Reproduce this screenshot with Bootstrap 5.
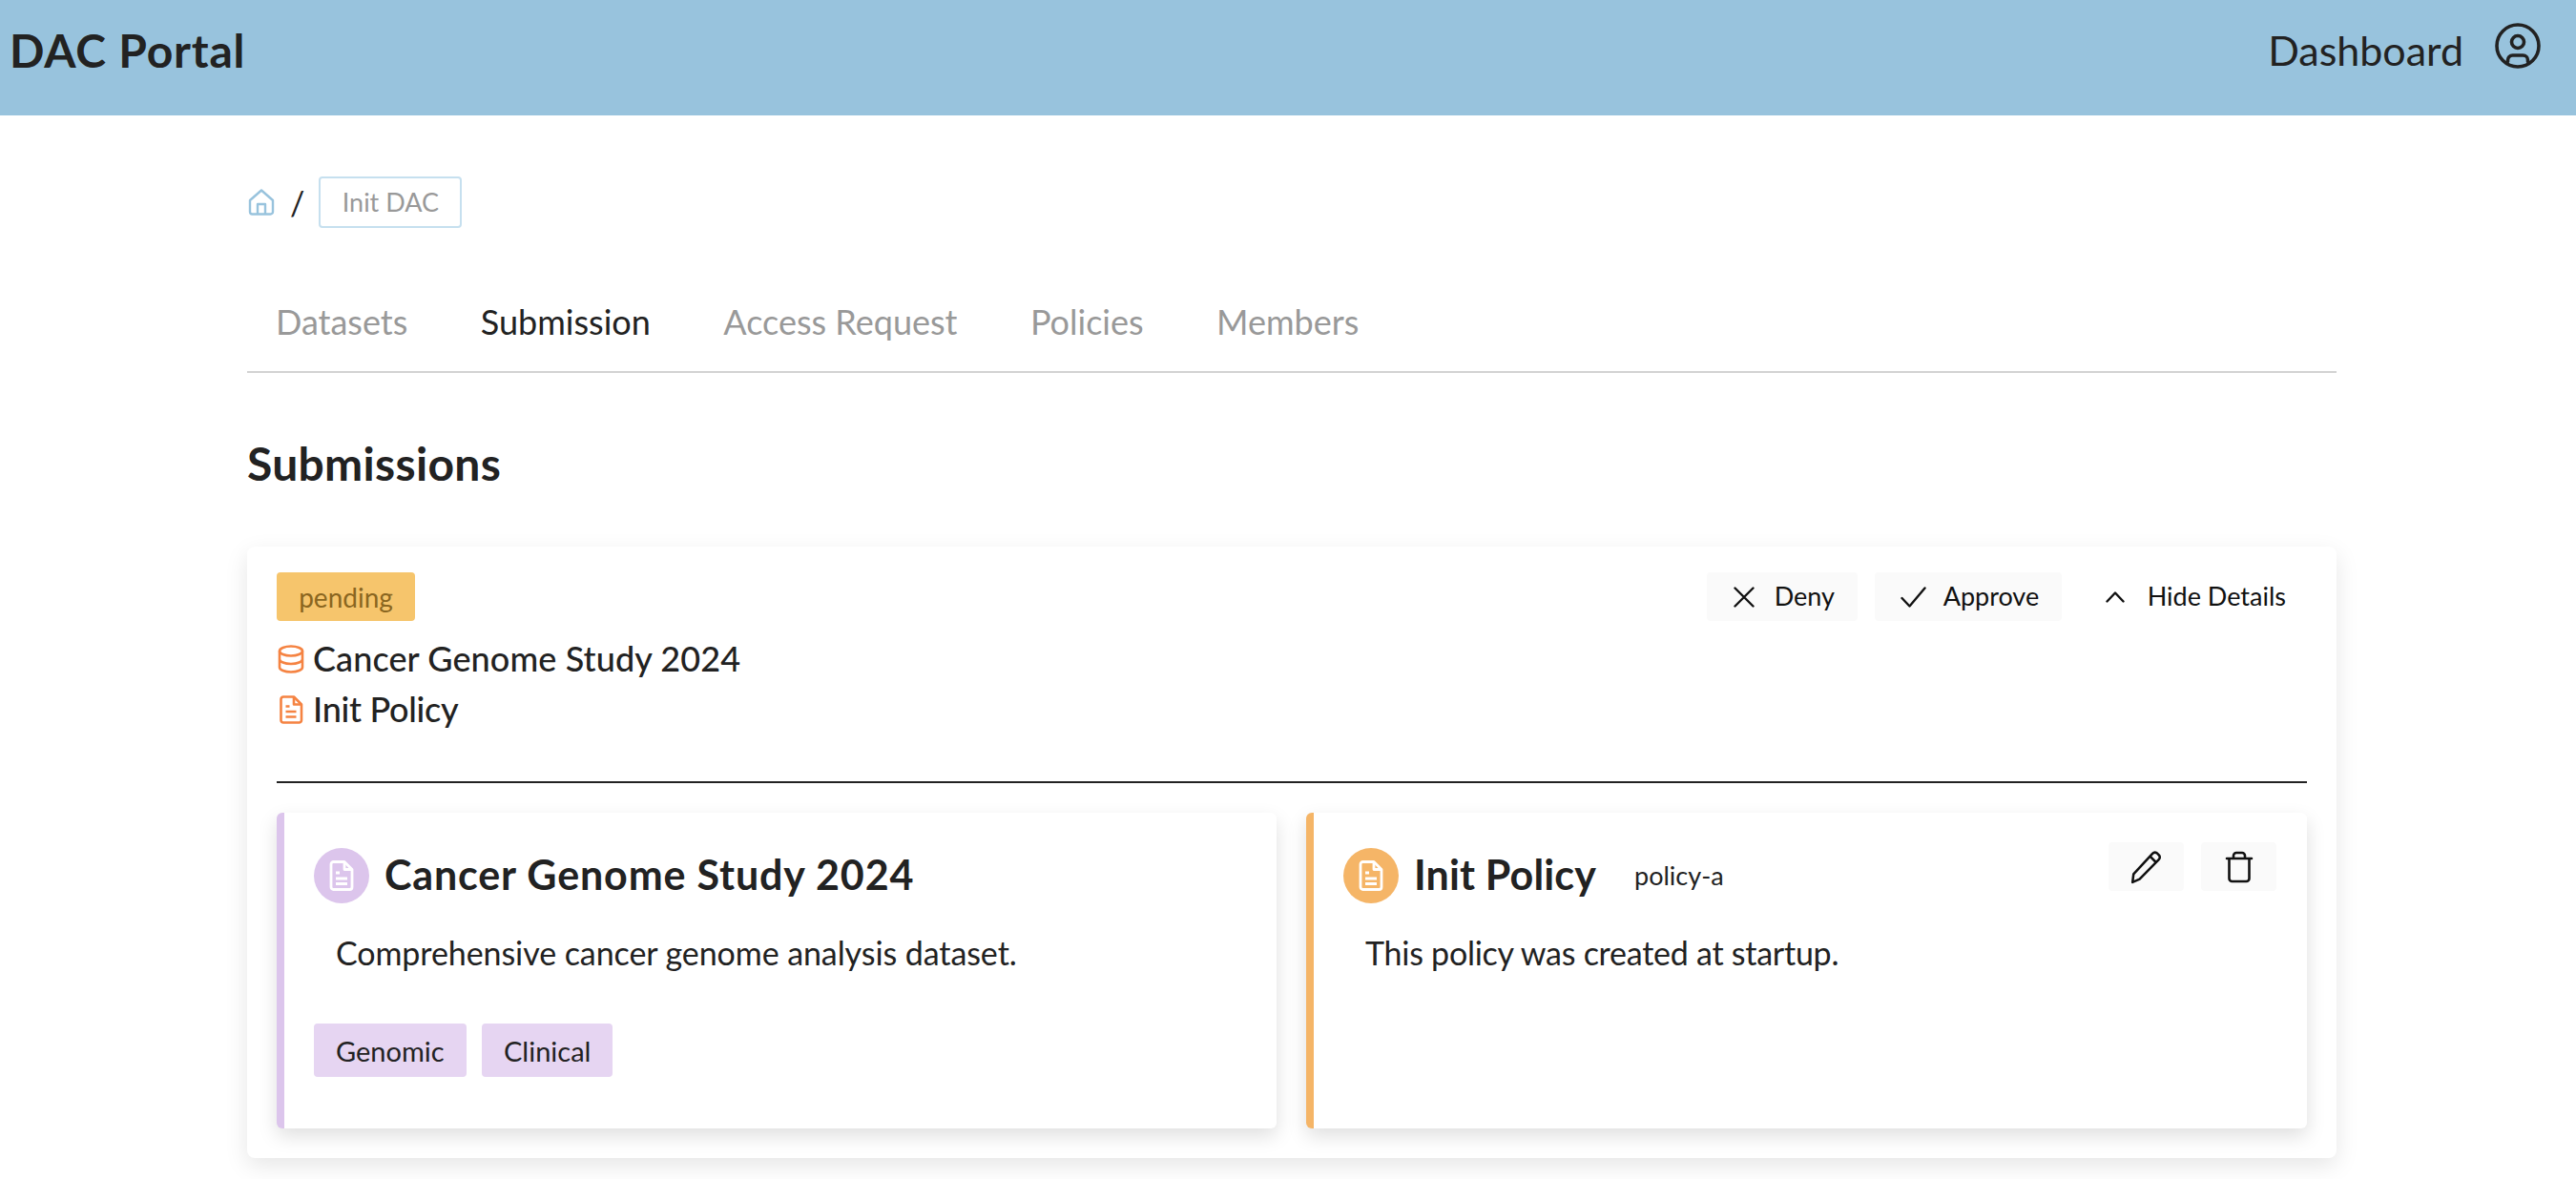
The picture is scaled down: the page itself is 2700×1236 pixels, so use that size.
<!DOCTYPE html>
<html lang="en">
<head>
<meta charset="utf-8">
<title>DAC Portal</title>
<link href="https://cdn.jsdelivr.net/npm/bootstrap@5.3.0/dist/css/bootstrap.min.css" rel="stylesheet">
<style>
body{font-family:Lato,"Noto Sans",sans-serif;color:#222;background:#fff;font-size:32px}
.dac-bar{background:#98c3dd;height:121px;padding:0 37px 16px 10px}
.dac-brand{font-size:48px;font-weight:700;color:#222;padding:0;margin:0;line-height:1;letter-spacing:.8px}
.dac-dash{font-size:43px;color:#222;padding:0;margin-right:33px;line-height:1}
.dac-avatar{margin-bottom:10px}
.dac-page{margin:0 251px 0 259px;padding-bottom:23px}
.dac-crumbs{margin-top:64px;height:54px}
.dac-crumbbox{border:2px solid #c6e0ef;border-radius:4px;color:#999;font-size:27px;height:54px;width:150px;margin-left:15px}
.dac-slash{font-size:34px;margin-left:16px}
.dac-home{margin-left:1px}
.dac-tabs{margin-top:48px;height:104px;border-bottom:2px solid #d3d3d3;padding-left:30px;gap:76.5px}
.dac-tabs .nav-link{font-size:36px;color:#999;padding:0;line-height:1;margin-bottom:2px}
.dac-tabs .nav-link.active{color:#222}
.dac-title{font-size:48px;font-weight:700;margin:66px 0 0;line-height:58px;letter-spacing:.3px}
.dac-outer{margin-top:58px;border:0;border-radius:8px;box-shadow:0 8px 24px rgba(0,0,0,.1);padding:27px 31px 31px}
.dac-status{background:#f6c56c;color:#8a6620;font-size:28px;font-weight:400;height:51px;width:145px;border-radius:4px;padding:0}
.dac-line{font-size:36px;font-weight:500;line-height:53px;letter-spacing:.1px}
.dac-line+.dac-line{letter-spacing:-.3px}
.dac-line svg{margin:0 9px 0 1px;flex:none}
.dac-gapped{margin-top:13px}
.dac-act{font-size:27px;height:51px;background:#fafafa;border:0;border-radius:4px;color:#111;padding:0;gap:21px}
.dac-act.dac-plain{background:transparent;gap:24px}
.dac-deny{width:158px;padding-left:28px}
.dac-approve{width:196px;padding-left:27px;gap:18px;margin-left:18px}
.dac-hide{margin-left:46px;margin-right:22px}
.dac-rule{height:2px;background:#222;margin:49px 0 31px}
.dac-pair{gap:31px}
.dac-inner{border:0;border-left:8px solid #dcc5ec;border-radius:6px;box-shadow:0 8px 20px rgba(0,0,0,.13);height:331px;padding:37px 31px 0;flex:1 1 0}
.dac-inner.dac-orange{border-left-color:#f5b567;padding-right:32px}
.dac-round{width:58px;height:58px;border-radius:50%;background:#dcc5ec;flex:none}
.dac-orange .dac-round{background:#f5b567}
.dac-name{font-size:43px;font-weight:700;margin:-3px 0 0 16px;line-height:58px;letter-spacing:.85px}
.dac-orange .dac-name{letter-spacing:.15px}
.dac-key{font-size:27px;margin-left:40px}
.dac-desc{font-size:34px;margin:29px 0 0 23px;line-height:46px;letter-spacing:-.08px}
.dac-orange .dac-desc{letter-spacing:-.25px}
.dac-tagrow{gap:16px;margin-top:51px}
.dac-tag{background:#e6d5f2;color:#222;font-size:29px;height:56px;border-radius:4px;font-weight:400;padding:0 0 0 23px}
.dac-wide{width:160px}
.dac-narrow{width:137px}
.dac-tools{gap:18px;margin-top:-6px}
.dac-sq{width:79px;height:51px;background:#fafafa;border:0;border-radius:4px;padding:0}
</style>
</head>
<body>
<nav class="navbar dac-bar d-flex justify-content-between align-items-center">
  <a class="navbar-brand dac-brand" href="#">DAC Portal</a>
  <div class="d-flex align-items-center">
    <a class="nav-link dac-dash" href="#">Dashboard</a>
    <svg class="dac-avatar" width="48" height="48" viewBox="0 0 48 48" fill="none" stroke="#222" stroke-width="3.6" stroke-linecap="round"><circle cx="24" cy="24" r="22"/><circle cx="24" cy="20" r="6.5"/><path d="M13.5 40.5V39a5 5 0 0 1 5-5h11a5 5 0 0 1 5 5v1.5"/></svg>
  </div>
</nav>
<main class="dac-page">
  <div class="d-flex align-items-center dac-crumbs">
    <a href="#" class="d-flex dac-home"><svg width="28" height="28" viewBox="0 0 28 28" fill="none" stroke="#98c3dd" stroke-width="2.4" stroke-linejoin="round"><path d="M2 12 14 1.500 26 12V24a2.500 2.500 0 0 1-2.500 2.500h-19A2.500 2.500 0 0 1 2 24Z"/><path d="M10 26.500V16h8v10.500"/></svg></a>
    <span class="dac-slash">/</span>
    <span class="dac-crumbbox d-flex align-items-center justify-content-center">Init DAC</span>
  </div>
  <ul class="nav dac-tabs align-items-center">
    <li class="nav-item"><a class="nav-link" href="#">Datasets</a></li>
    <li class="nav-item"><a class="nav-link active" href="#">Submission</a></li>
    <li class="nav-item"><a class="nav-link" href="#">Access Request</a></li>
    <li class="nav-item"><a class="nav-link" href="#">Policies</a></li>
    <li class="nav-item"><a class="nav-link" href="#">Members</a></li>
  </ul>
  <h2 class="dac-title">Submissions</h2>
  <section class="card dac-outer">
    <div class="d-flex justify-content-between align-items-start">
      <div>
        <span class="badge dac-status d-flex align-items-center justify-content-center">pending</span>
        <div class="dac-line dac-gapped d-flex align-items-center">
          <svg width="28" height="30" viewBox="0 0 28 30" fill="none" stroke="#f58342" stroke-width="2.6"><ellipse cx="14" cy="6.500" rx="12" ry="5"/><path d="M2 6.500v17c0 2.800 5.400 5 12 5s12-2.200 12-5v-17M2 15c0 2.800 5.400 5 12 5s12-2.200 12-5"/></svg>
          <span>Cancer Genome Study 2024</span>
        </div>
        <div class="dac-line d-flex align-items-center">
          <svg width="28" height="30" viewBox="0 0 28 30" fill="none" stroke="#f58342" stroke-width="2.6" stroke-linejoin="round"><path d="M3.500 4a2.500 2.500 0 0 1 2.500-2.500h11l8 8V26a2.500 2.500 0 0 1-2.500 2.500H6A2.500 2.500 0 0 1 3.500 26Z"/><path d="M17 1.500v8h8M8.500 11.500h4M8.500 17h11M8.500 22.500h11"/></svg>
          <span>Init Policy</span>
        </div>
      </div>
      <div class="d-flex align-items-center">
        <button class="btn dac-act dac-deny d-flex align-items-center" type="button">
          <svg width="22" height="22" viewBox="0 0 22 22" fill="none" stroke="#111" stroke-width="2.400" stroke-linecap="round"><path d="M1.500 1.500l19 19M20.500 1.500l-19 19"/></svg>Deny</button>
        <button class="btn dac-act dac-approve d-flex align-items-center" type="button">
          <svg width="27" height="22" viewBox="0 0 27 22" fill="none" stroke="#111" stroke-width="2.400" stroke-linecap="round" stroke-linejoin="round"><path d="M1.500 12l8 8.500L25.500 1.500"/></svg>Approve</button>
        <button class="btn dac-act dac-plain dac-hide d-flex align-items-center" type="button">
          <svg width="20" height="12" viewBox="0 0 20 12" fill="none" stroke="#111" stroke-width="2.400" stroke-linecap="round" stroke-linejoin="round"><path d="M1.500 10.500 10 1.500l8.500 9"/></svg>Hide Details</button>
      </div>
    </div>
    <div class="dac-rule"></div>
    <div class="d-flex dac-pair">
      <article class="card dac-inner">
        <div class="d-flex align-items-center">
          <span class="dac-round d-flex align-items-center justify-content-center"><svg width="28" height="32" viewBox="0 0 28 32" fill="none" stroke="#fff" stroke-width="2.800" stroke-linejoin="round"><path d="M3 4a2.500 2.500 0 0 1 2.500-2.500h11.500l8 8V28a2.500 2.500 0 0 1-2.500 2.500h-17A2.500 2.500 0 0 1 3 28Z"/><path d="M17 1.500v8h8M8 13h4M8 19h12M8 24.500h12"/></svg></span>
          <h3 class="dac-name">Cancer Genome Study 2024</h3>
        </div>
        <p class="dac-desc">Comprehensive cancer genome analysis dataset.</p>
        <div class="d-flex dac-tagrow">
          <span class="badge dac-tag dac-wide d-flex align-items-center">Genomic</span>
          <span class="badge dac-tag dac-narrow d-flex align-items-center">Clinical</span>
        </div>
      </article>
      <article class="card dac-inner dac-orange">
        <div class="d-flex align-items-center">
          <span class="dac-round d-flex align-items-center justify-content-center"><svg width="28" height="32" viewBox="0 0 28 32" fill="none" stroke="#fff" stroke-width="2.800" stroke-linejoin="round"><path d="M3 4a2.500 2.500 0 0 1 2.500-2.500h11.500l8 8V28a2.500 2.500 0 0 1-2.500 2.500h-17A2.500 2.500 0 0 1 3 28Z"/><path d="M17 1.500v8h8M8 13h4M8 19h12M8 24.500h12"/></svg></span>
          <h3 class="dac-name">Init Policy</h3>
          <span class="dac-key">policy-a</span>
          <div class="d-flex ms-auto align-self-start dac-tools">
            <button class="btn dac-sq d-flex align-items-center justify-content-center" type="button"><svg width="36" height="36" viewBox="0 0 34 34" fill="none" stroke="#111" stroke-width="2.400" stroke-linejoin="round"><path d="M3 32l1-8L23 3.500a3 3 0 0 1 4.500 0l1.500 1.500a3 3 0 0 1 0 4.500L10 29Z"/><path d="M20.500 6.500l6 6"/></svg></button>
            <button class="btn dac-sq d-flex align-items-center justify-content-center" type="button"><svg width="30" height="34" viewBox="0 0 30 34" fill="none" stroke="#111" stroke-width="2.600" stroke-linejoin="round" stroke-linecap="round"><path d="M2 8h26M4.500 8v21a3 3 0 0 0 3 3h15a3 3 0 0 0 3-3V8M9 8V5a3 3 0 0 1 3-3h6a3 3 0 0 1 3 3v3"/></svg></button>
          </div>
        </div>
        <p class="dac-desc">This policy was created at startup.</p>
      </article>
    </div>
  </section>
</main>
<script src="https://cdn.jsdelivr.net/npm/bootstrap@5.3.0/dist/js/bootstrap.bundle.min.js"></script>
</body>
</html>
